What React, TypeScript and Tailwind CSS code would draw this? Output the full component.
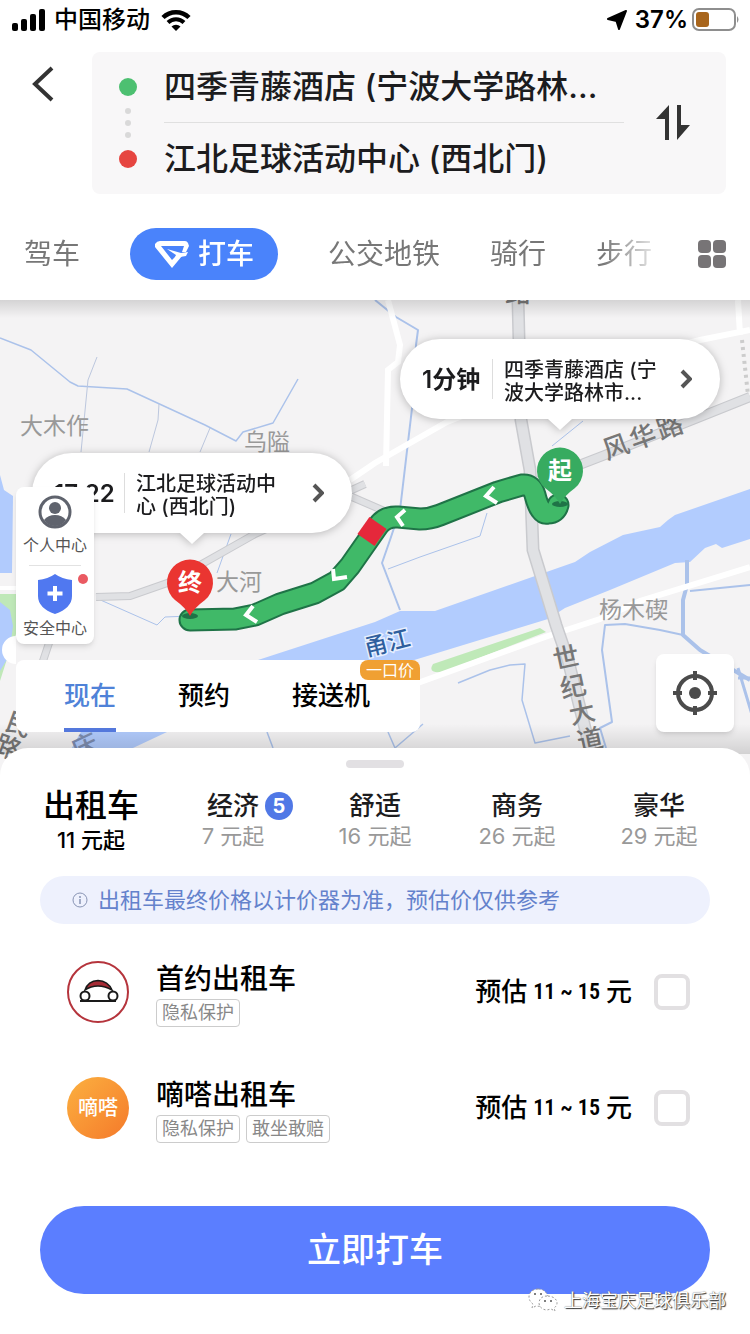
import * as React from 'react';
import { cva } from 'class-variance-authority';
import clsx from 'clsx';

const FONT = "font-['Inter','Noto_Sans_CJK_SC',sans-serif]";

const carClasses = [
  { name: '出租车', price: '11 元起' },
  { name: '经济', price: '7 元起', count: 5 },
  { name: '舒适', price: '16 元起' },
  { name: '商务', price: '26 元起' },
  { name: '豪华', price: '29 元起' },
];

const providers = [
  { id: 'shouyue', name: '首约出租车', tags: ['隐私保护'], logo: <ShouyueLogo /> },
  { id: 'dida', name: '嘀嗒出租车', tags: ['隐私保护', '敢坐敢赔'], logo: <DidaLogo /> },
];

function StatusBar() {
  return (
    <div className="flex h-10 items-center justify-between pl-3 pr-2.5 text-black">
      <div className="flex items-center">
        <svg width="34" height="22" viewBox="0 0 34 22">
          <rect x="0" y="14" width="6" height="8" rx="2" />
          <rect x="9" y="10" width="6" height="12" rx="2" />
          <rect x="18" y="5" width="6" height="17" rx="2" />
          <rect x="27" y="0" width="6" height="22" rx="2" />
        </svg>
        <span className="ml-2 text-2xl leading-none font-medium">中国移动</span>
        <svg className="ml-2.5" width="32" height="22" viewBox="0 0 32 22" fill="none" stroke="#000">
          <path d="M3 8.5a18.500 18.500 0 0 1 26 0" strokeWidth="4.500" />
          <path d="M8 13.500a11.500 11.500 0 0 1 16 0" strokeWidth="4" />
          <path d="M11.500 17.500a6.500 6.500 0 0 1 9 0L16 22z" fill="#000" stroke="none" />
        </svg>
      </div>
      <div className="flex items-center">
        <svg width="20" height="20" viewBox="0 0 20 20">
          <path d="M19 1 12 19 9.500 11 1 9z" stroke="#000" strokeWidth="2" strokeLinejoin="round" />
        </svg>
        <span className="ml-2 text-2xl leading-none font-semibold">37%</span>
        <svg className="ml-1" width="48" height="24" viewBox="0 0 48 24">
          <rect x="1" y="1" width="42" height="21" rx="6" fill="#fff" stroke="#8e8e8e" strokeWidth="2" />
          <rect x="4" y="4" width="13" height="15" rx="3" fill="#a8651c" />
          <path d="M45 8q3 3.500 0 7z" fill="#8e8e8e" />
        </svg>
      </div>
    </div>
  );
}

function RouteBox() {
  return (
    <div className="flex items-start pt-3 pr-6">
      <button className="flex h-16 w-[92px] items-center pl-8" aria-label="返回">
        <svg width="22" height="36" viewBox="0 0 22 36" fill="none" stroke="#333" strokeWidth="4">
          <path d="M20 2 3 18l17 16" />
        </svg>
      </button>
      <div className="flex min-w-0 flex-1 items-center rounded-lg bg-[#f8f7f8] pr-9 text-[#1c1c1e]">
        <div className="flex w-[72px] flex-col items-center">
          <span className="size-[18px] rounded-full bg-[#4dc071]"></span>
          <span className="my-3 flex h-[30px] flex-col items-center justify-between">
            <i className="size-1.5 rounded-full bg-[#d9d9d9]"></i>
            <i className="size-1.5 rounded-full bg-[#d9d9d9]"></i>
            <i className="size-1.5 rounded-full bg-[#d9d9d9]"></i>
          </span>
          <span className="size-[18px] rounded-full bg-[#e64540]"></span>
        </div>
        <div className="min-w-0 flex-1 text-[32px] font-medium whitespace-nowrap">
          <button className="flex h-[71px] w-full items-center border-b border-[#e0e0e0]">四季青藤酒店 (宁波大学路林...</button>
          <button className="flex h-[71px] w-full items-center">江北足球活动中心 (西北门)</button>
        </div>
        <button className="ml-8" aria-label="交换起终点">
          <svg width="34" height="36" viewBox="0 0 34 36" fill="#333">
            <path d="M13 0v35H9V14H0z" />
            <path d="M21 0h4v20h9L21 35z" />
          </svg>
        </button>
      </div>
    </div>
  );
}

function ModeTabs() {
  return (
    <nav className="flex items-center pt-[34px] pb-5 pr-6 pl-6">
      <div className="flex min-w-0 flex-1 items-center gap-[50px] overflow-hidden text-[28px] leading-none whitespace-nowrap text-[#777] [mask-image:linear-gradient(to_right,black_92%,transparent_102%)]">
        <button>驾车</button>
        <button className="flex h-[52px] shrink-0 items-center rounded-full bg-[#4a83fb] px-6 font-medium text-white">
          <svg className="mr-2" width="36" height="28" viewBox="0 0 36 28" fill="#fff">
            <path fillRule="evenodd" d="M6 1h25q2 0 3 2l1 3-3 6h-4l2-6H7l11 14 4-4h6L18 28 1 7V4q2-3 5-3z" />
            <path d="M13 9l14 4 7-1-2 4-6 1-7 5 3-7z" />
          </svg>
          打车
        </button>
        <button>公交地铁</button>
        <button>骑行</button>
        <button>步行</button>
      </div>
      <button className="ml-[45px] grid grid-cols-2 gap-0.5" aria-label="全部">
        {[0, 1, 2, 3].map((i) => <i key={i} className="size-[13px] rounded bg-[#777476]"></i>)}
      </button>
    </nav>
  );
}

function MapCanvas() {
  return (
    <svg className="absolute inset-0 size-full" viewBox="0 300 750 476" preserveAspectRatio="xMidYMid slice" fill="none">
      <defs>
        <linearGradient id="topShade" x1="0" y1="0" x2="0" y2="1">
          <stop offset="0" stopColor="#000" stopOpacity="0.13" />
          <stop offset="1" stopColor="#000" stopOpacity="0" />
        </linearGradient>
        <linearGradient id="bottomShade" x1="0" y1="0" x2="0" y2="1">
          <stop offset="0" stopColor="#000" stopOpacity="0" />
          <stop offset="1" stopColor="#000" stopOpacity="0.14" />
        </linearGradient>
      </defs>
      <rect x="0" y="300" width="750" height="476" fill="#f4f3f4" />

      {/* park and pond on the left edge */}
      <path d="M0 594h16v40l-9 25-7 22z" fill="#bfe8b8" />
      <path d="M0 602l10 8 3 16-4 30-9 15zM0 475l4 15 9 6-1 77H0z" fill="#b1cbfd" />
      <path d="M0 588h16M16 638a12 12 0 1 0 0 24" fill="#fff" stroke="#fff" strokeWidth="4" />

      {/* river */}
      <path d="M258 660 375 622l25-11h35l100-35 40-14 15-10 33-17 37-8 8-7 7-5 75-26v50l-28 9-6-4-11 4-15 14-15 1-65 27-45 18-17 11-173 53-208 60-34 16-68 12 17-30z" fill="#b2ccfe" />
      <path d="M433 664l107-36 6 4-103 40q-16 2-10-8z" fill="#bfe9b8" />

      {/* streams */}
      <g stroke="#abc2ea" strokeWidth="2" strokeLinejoin="round">
        <path d="M0 338l31 12 39 32 8 4 49 3 78 36 31 16 7-9 30-9 25-44" strokeWidth="1.500" />
        <path d="M97 357l-9 23-7 72M159 404l-1 16-9 32M210 428l-10 24" stroke="#bcc7de" strokeWidth="1" />
        <path d="M375 300l21 17 22 13-2 15-3 55-13 110-10 30-8 23 18 47" />
        <path d="M583 421l-31 25M487 513l-7 23-60 21-32 12M96 598l61 27 8-8 25-1M231 534l-14 39" strokeWidth="1" />
        <path d="M687 560v25l-4 15v35l17 15 50 30" strokeWidth="4" />
        <path d="M690 591l60-6M683 635l-23-5-35-6-20 1-3 25 10 72-12 6 6 20" />
        <path d="M458 683l32-13 20-5 15-1-3 36 13 43 35-7M388 732l7 16 28-24M267 732l6 16" strokeWidth="1.500" />
        <path d="M738 668l15 50M738 678h12" strokeWidth="3" />
      </g>

      {/* roads */}
      <g stroke="#fff" strokeWidth="6">
        <path d="M388 300l12 45-2 17-10 8-2 96" />
        <path d="M738 300l2 35M750 330l-50 10-120 30-133 52-72 41-25 17" />
        <path d="M415 684l130-47 55-18 40-18 110-34" />
      </g>
      <g stroke="#c9cace">
        <path d="M96 597l34-1 40-14 85-48 110-50M352 497l60 26" strokeWidth="8" />
        <path d="M530 484l75-29 145-58" strokeWidth="10" />
        <path d="M518 300l3 120 9 50 3 80 23 75 12 35 25 100" strokeWidth="13" />
        <path d="M50 640l-10 30" strokeWidth="8" />
      </g>
      <g stroke="#e0e1e4">
        <path d="M96 597l34-1 40-14 85-48 110-50M352 497l60 26" strokeWidth="6" />
        <path d="M530 484l75-29 145-58" strokeWidth="8" />
        <path d="M518 300l3 120 9 50 3 80 23 75 12 35 25 100" strokeWidth="10" />
        <path d="M50 640l-10 30" strokeWidth="6" />
      </g>
      <path d="M742 340l6 55" stroke="#ccc" strokeWidth="4" strokeDasharray="3 4" />

      {/* place names */}
      <g fill="#999" fontSize="23">
        <text x="20" y="434">大木作</text>
        <text x="244" y="450">乌隘</text>
        <text x="216" y="590">大河</text>
        <text x="599" y="618">杨木碶</text>
      </g>
      <g fill="#777" fontSize="26" fontWeight="500" textAnchor="middle">
        <text x="518" y="302">路</text>
        <text transform="translate(616 447) rotate(-20)" y="9">风</text>
        <text transform="translate(643 437) rotate(-20)" y="9">华</text>
        <text transform="translate(670 427) rotate(-20)" y="9">路</text>
        <text transform="translate(566 658) rotate(-12)" y="9">世</text>
        <text transform="translate(573 687) rotate(-12)" y="9">纪</text>
        <text transform="translate(582 713) rotate(-12)" y="9">大</text>
        <text transform="translate(590 740) rotate(-12)" y="9">道</text>
        <text transform="translate(19 725) rotate(20)" y="9">民</text>
        <text transform="translate(8 748) rotate(20)" y="9">路</text>
        <text transform="translate(85 746) rotate(-25)" y="9" fill="#7d8db0">庆</text>
      </g>
      <text transform="translate(387 642) rotate(-14)" y="9" textAnchor="middle" fontSize="23" fontWeight="500" fill="#2f5f9e" stroke="#e8f0ff" strokeWidth="3" paintOrder="stroke">甬江</text>

      {/* route */}
      <g strokeLinejoin="round" strokeLinecap="round">
        <path d="M190 620l45-1 20-4 25-11 35-11 22-12 13-15 28-40q7-10 20-9l22 2q10 0 20-4l58-23 24-7q10-1 13 10 5 20 13 18 8 0 10-8" stroke="#1f7347" strokeWidth="23" />
        <path d="M190 620l45-1 20-4 25-11 35-11 22-12 13-15 28-40q7-10 20-9l22 2q10 0 20-4l58-23 24-7q10-1 13 10 5 20 13 18 8 0 10-8" stroke="#40b968" strokeWidth="19" />
      </g>
      <path d="M366 540l12-17" stroke="#e5283b" strokeWidth="21" />
      <g stroke="#fff" strokeWidth="4">
        <path d="M253 606l-7 9 11 7M333 569l1 10 13-2M405 510l-8 7 6 9M494 487l-8 9 11 7" />
      </g>

      {/* start and end pins */}
      <g fontSize="24" fontWeight="700" textAnchor="middle">
        <ellipse cx="190" cy="616" rx="8" ry="3" fill="#1f7347" />
        <path d="M190 616q-4-8-15-16a23 23 0 1 1 30 0q-11 8-15 16z" fill="#ea3531" />
        <text x="190" y="591" fill="#fff">终</text>
        <ellipse cx="560" cy="504" rx="8" ry="3" fill="#1f7347" />
        <path d="M560 504q-4-8-15-16a23 23 0 1 1 30 0q-11 8-15 16z" fill="#37ab60" />
        <text x="560" y="479" fill="#fff">起</text>
      </g>

      <rect x="0" y="300" width="750" height="18" fill="url(#topShade)" />
      <rect x="0" y="724" width="750" height="30" fill="url(#bottomShade)" />
    </svg>
  );
}

interface CalloutProps {
  time: string,
  lines: string[],
  className?: string
}

function Callout(props: CalloutProps) {
  return (
    <button className={clsx('absolute flex h-20 w-80 items-center rounded-full bg-white pr-7 pl-[22px] text-left text-[#1c1c1e] drop-shadow-[0_1px_4px_rgba(0,0,0,0.25)]', props.className)}>
      <span className="w-[60px] pt-0.5 text-2xl leading-none font-semibold whitespace-nowrap">{props.time}</span>
      <span className="mr-[11px] ml-2.5 h-10 w-px bg-[#ddd]"></span>
      <span className="flex-1 pt-1.5 text-xl leading-[23px] font-medium whitespace-nowrap">
        {props.lines.map((line) => <span key={line} className="block">{line}</span>)}
      </span>
      <svg width="12" height="20" viewBox="0 0 12 20" fill="none" stroke="#555" strokeWidth="4">
        <path d="M2 2l8 8-8 8" />
      </svg>
      <svg className="absolute top-full left-1/2 -translate-x-1/2" width="24" height="11" viewBox="0 0 24 11" fill="#fff">
        <path d="M0 0h24L12 11z" />
      </svg>
    </button>
  );
}

function SideCard() {
  return (
    <div className="absolute top-[187px] left-4 flex w-[78px] flex-col items-center rounded-lg bg-white text-base leading-none text-[#555] shadow-md">
      <button className="flex h-[78px] w-full flex-col items-center justify-between pt-2 pb-3">
        <svg width="34" height="34" viewBox="0 0 34 34" fill="#5f636d">
          <circle cx="17" cy="17" r="15" fill="none" stroke="#5f636d" strokeWidth="3" />
          <circle cx="17" cy="13" r="6" />
          <path d="M6 25q4-5 11-5t11 5q-4 6-11 6T6 25z" />
        </svg>
        个人中心
      </button>
      <span className="h-px w-[52px] bg-[#e2e2e2]"></span>
      <button className="relative flex h-[78px] w-full flex-col items-center justify-between pt-2 pb-2">
        <svg width="34" height="40" viewBox="0 0 34 40">
          <path d="M17 0q7 5 17 6v16q0 12-17 18Q0 34 0 22V6q10-1 17-6z" fill="#5078f0" />
          <path d="M17 12v15M9.500 19.500h15" stroke="#fff" strokeWidth="4" />
        </svg>
        <i className="absolute top-2 right-1.5 size-2.5 rounded-full bg-[#ea5a62]"></i>
        安全中心
      </button>
    </div>
  );
}

function MapControls() {
  return (
    <div className="absolute inset-x-4 bottom-11 flex items-end justify-between">
      <div className="relative flex h-[72px] w-[404px] rounded-lg bg-white pl-12 text-[26px] leading-none font-medium text-black">
        <button className="relative mr-[62px] text-[#4f82d8]">
          现在
          <i className="absolute inset-x-0 bottom-0 h-1 bg-[#5478dc]"></i>
        </button>
        <button className="mr-[62px]">预约</button>
        <button>接送机</button>
        <span className="absolute top-0 right-0 flex h-5 w-[60px] items-center justify-center rounded-tl-lg rounded-tr-lg rounded-bl-lg bg-[#f0a032] text-base leading-none font-normal text-white">一口价</span>
      </div>
      <button className="flex size-[78px] items-center justify-center rounded-lg bg-white shadow-md" aria-label="定位">
        <svg width="44" height="44" viewBox="0 0 44 44" fill="none" stroke="#4b4b4b" strokeWidth="4">
          <circle cx="22" cy="22" r="17" />
          <path d="M22 0v9M22 35v9M0 22h9M35 22h9" />
          <circle cx="22" cy="22" r="6" fill="#4b4b4b" stroke="none" />
        </svg>
      </button>
    </div>
  );
}

const className = cva('flex h-9 items-center leading-none font-medium', {
  variants: {
    active: { true: 'text-[32px] text-black', false: 'text-[26px] text-[#1c1c1e]' },
  },
});

const classPrice = cva('text-[22px] leading-6', {
  variants: {
    active: { true: 'mt-1 font-medium text-black', false: 'text-[#999]' },
  },
});

function CarClassTabs() {
  const [current, setCurrent] = React.useState(0);

  return (
    <div className="mt-5 grid h-16 grid-cols-5 px-5">
      {carClasses.map((item, index) => (
        <button key={item.name} onClick={() => setCurrent(index)} className="flex flex-col items-center whitespace-nowrap">
          <span className={clsx(className({ active: index === current }), 'relative')}>
            {item.name}
            {item.count && (
              <i className="absolute left-full ml-1.5 flex size-7 items-center justify-center rounded-full bg-[#5078e6] text-xl font-bold text-white not-italic">{item.count}</i>
            )}
          </span>
          <span className={classPrice({ active: index === current })}>{item.price}</span>
        </button>
      ))}
    </div>
  );
}

function ShouyueLogo() {
  return (
    <svg width="62" height="62" viewBox="0 0 62 62" fill="none">
      <circle cx="31" cy="31" r="30" fill="#fff" stroke="#b5343c" strokeWidth="2" />
      <path d="M18 29q3-9 13-9.500Q41 20 45 29q-7-4-14-4t-13 4z" fill="#a62b35" stroke="#1a1a1a" strokeWidth="1.500" />
      <path d="M13 40h36" stroke="#1a1a1a" strokeWidth="2" />
      <circle cx="18" cy="35" r="4.500" fill="#fff" stroke="#1a1a1a" strokeWidth="2" />
      <circle cx="46" cy="35" r="4.500" fill="#fff" stroke="#1a1a1a" strokeWidth="2" />
    </svg>
  );
}

function DidaLogo() {
  return (
    <span className="flex size-[62px] items-center justify-center rounded-full bg-linear-to-br from-[#fbb040] to-[#f4792a] text-xl font-medium text-white">嘀嗒</span>
  );
}

function ProviderRow(props: { provider: typeof providers[number] }) {
  const { id, name, tags, logo } = props.provider;

  return (
    <label htmlFor={id} className="flex h-[116px] items-center pr-[60px] pl-[67px] text-black">
      {logo}
      <div className="ml-[27px] flex-1 pt-1">
        <div className="text-[28px] leading-9 font-medium">{name}</div>
        <div className="mt-0.5 flex gap-1.5">
          {tags.map((tag) => (
            <span key={tag} className="flex h-7 items-center rounded border border-[#ccc] px-[5px] text-lg leading-none text-[#888]">{tag}</span>
          ))}
        </div>
      </div>
      <span className="flex items-center gap-1.5 text-[26px] leading-none font-medium">
        预估
        <span className="font-['Roboto_Condensed','Inter',sans-serif] text-[22px] leading-none font-semibold">11 ~ 15</span>
        元
      </span>
      <input id={id} type="checkbox" className="ml-[22px] size-9 appearance-none rounded-lg border-4 border-[#e2e0e2] bg-white checked:bg-[#5b7dff]" />
    </label>
  );
}

function Watermark() {
  return (
    <div className="absolute right-6 bottom-5 flex items-center text-[18px] leading-none text-white [text-shadow:1px_1px_1px_#333,0_0_1px_#555]">
      <svg className="mr-1.5" width="30" height="26" viewBox="0 0 30 26" fill="#fff" stroke="#999" strokeWidth="1">
        <path d="M10 1C4 1 1 5 1 9q0 4 4 7l-1 4 4-2q5 1 9-1 4-3 3-8-2-8-10-8z" strokeDasharray="2 2" />
        <path d="M19 8c-5 0-8 3-8 7s4 7 8 7l4-1 4 2-1-3q3-2 3-5c0-4-4-7-10-7z" strokeDasharray="2 2" />
        <g fill="#555" stroke="none">
          <circle cx="7" cy="6" r="1" />
          <circle cx="13" cy="6" r="1" />
          <circle cx="17" cy="13" r="1" />
          <circle cx="23" cy="13" r="1" />
        </g>
      </svg>
      上海宝庆足球俱乐部
    </div>
  );
}

export default function App() {
  return (
    <div className={clsx('relative bg-white', FONT)}>
      <header>
        <StatusBar />
        <RouteBox />
        <ModeTabs />
      </header>

      <section className="relative h-[476px] overflow-hidden">
        <MapCanvas />
        <Callout time="1分钟" lines={['四季青藤酒店 (宁', '波大学路林市...']} className="top-[39px] left-[400px]" />
        <Callout time="17:22" lines={['江北足球活动中', '心 (西北门)']} className="top-[153px] left-8" />
        <SideCard />
        <MapControls />
      </section>

      <main className="relative -mt-7 rounded-t-[28px] bg-white pt-3 pb-10">
        <div className="mx-auto h-2 w-[58px] rounded-full bg-[#e2e0e3]"></div>
        <CarClassTabs />
        <div className="mx-10 mt-6 flex h-12 items-center rounded-full bg-[#eef1fd] pl-8 text-[22px] leading-none whitespace-nowrap text-[#6482cc]">
          <svg className="mr-2.5" width="16" height="16" viewBox="0 0 16 16" fill="none" stroke="#8894b4">
            <circle cx="8" cy="8" r="7" />
            <path d="M8 7v5M8 4v2" strokeWidth="1.500" />
          </svg>
          出租车最终价格以计价器为准，预估价仅供参考
        </div>
        <div className="mt-2.5">
          {providers.map((provider) => <ProviderRow key={provider.id} provider={provider} />)}
        </div>
        <div className="mt-10 px-10">
          <button className="h-[88px] w-full rounded-full bg-[#5b7eff] text-[34px] leading-none font-medium text-white">立即打车</button>
        </div>
      </main>
      <Watermark />
    </div>
  );
}
